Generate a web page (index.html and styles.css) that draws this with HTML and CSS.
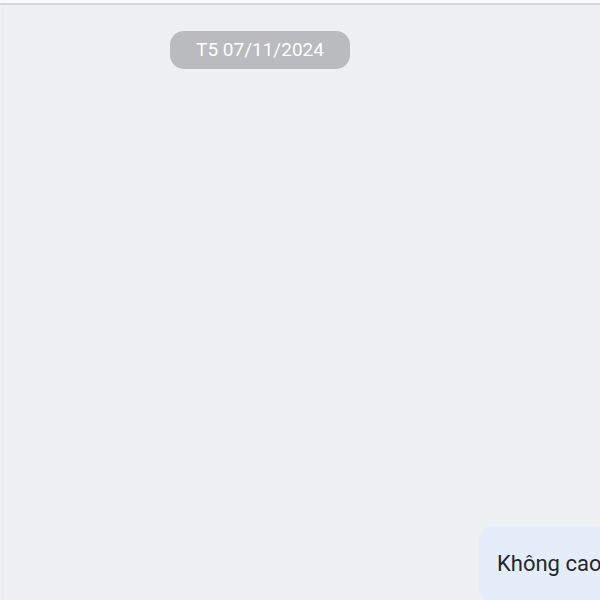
FILE: index.html
```html
<!DOCTYPE html>
<html lang="vi">
<head>
<meta charset="utf-8">
<link rel="stylesheet" href="styles.css">
</head>
<body>
<div class="topbar"></div>
<main class="chat">
  <div class="date-pill">T5 07/11/2024</div>
  <div class="bubble">Không cao lắm đâu</div>
</main>
</body>
</html>
```
FILE: styles.css
```css
html, body {
  margin: 0;
  padding: 0;
  width: 600px;
  height: 600px;
  overflow: hidden;
  background: #eff0f2;
  font-family: Roboto, "Noto Sans", "Liberation Sans", sans-serif;
}
.topbar {
  height: 3px;
  background: #fafafa;
  border-bottom: 2px solid #d3d4d6;
}
.chat {
  display: flex;
  flex-direction: column;
  align-items: flex-start;
  height: 595px;
  border-left: 2px solid #e9eeee;
  margin-left: 2px;
  box-sizing: border-box;
}
.date-pill {
  margin-top: 26px;
  margin-left: 166px;
  width: 180px;
  height: 38px;
  border-radius: 14px;
  background: #b9bbbe;
  color: #ffffff;
  font-size: 19px;
  line-height: 38px;
  text-align: center;
}
.bubble {
  margin-top: 457px;
  margin-left: 475px;
  padding: 0 18px;
  height: 80px;
  line-height: 76px;
  border-radius: 14px;
  background: #e6edfa;
  color: #24272b;
  font-size: 22px;
  white-space: nowrap;
}
```
